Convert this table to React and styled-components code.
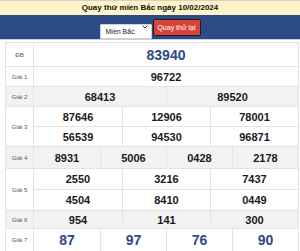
import React from 'react';
import styled, { createGlobalStyle } from 'styled-components';

// heights per line, the row's own top border is counted outside them
const ROWS = [
  { label: 'ĐB', lines: [['83940']], big: true, heights: [23] },
  { label: 'Giải 1', lines: [['96722']], heights: [19] },
  { label: 'Giải 2', lines: [['68413', '89520']], shade: true, heights: [19] },
  {
    label: 'Giải 3',
    lines: [
      ['87646', '12906', '78001'],
      ['56539', '94530', '96871'],
    ],
    heights: [19, 19],
  },
  { label: 'Giải 4', lines: [['8931', '5006', '0428', '2178']], shade: true, heights: [21] },
  {
    label: 'Giải 5',
    lines: [
      ['2550', '3216', '7437'],
      ['4504', '8410', '0449'],
    ],
    heights: [20, 20],
  },
  { label: 'Giải 6', lines: [['954', '141', '300']], shade: true, heights: [17] },
  { label: 'Giải 7', lines: [['87', '97', '76', '90']], big: true, heights: [22] },
];

const GlobalStyle = createGlobalStyle`
  * { box-sizing: border-box; }
  body {
    margin: 0;
    background: #fff;
    font-family: "Liberation Sans", Arial, sans-serif;
  }
`;

const Title = styled.div`
  height: 15px;
  border-top: 1px solid #d6d2bd;
  background: #fdf3c6;
  color: #111;
  font-size: 8px;
  font-weight: bold;
  line-height: 14px;
  text-align: center;
`;

const Toolbar = styled.div`
  height: 25px;
  background: #2c4a85;
  border-bottom: 1px solid #c9d0dc;
  display: flex;
  align-items: center;
  justify-content: center;
  gap: 1px;
`;

const SelectBox = styled.div`
  position: relative;
  width: 52px;
  height: 15px;
  svg {
    position: absolute;
    right: 4px;
    top: 5px;
    pointer-events: none;
  }
`;

const Select = styled.select`
  appearance: none;
  width: 100%;
  height: 100%;
  padding: 0 0 0 5px;
  font-family: inherit;
  font-size: 7px;
  color: #222;
  background: #fff;
  border: 1px solid #d0d0d0;
  border-radius: 1px;
  outline: none;
`;

const Button = styled.button`
  width: 48px;
  height: 17px;
  padding: 0;
  font-family: inherit;
  font-size: 7px;
  color: #fff;
  background: #d8433a;
  border: 1px solid #1d1d1d;
  border-radius: 2px;
  cursor: pointer;
`;

const Table = styled.div`
  margin: 2px 1px 0 5px;
  border: 1px solid #e4e4e4;
`;

const Row = styled.div`
  display: grid;
  grid-template-columns: 28px 1fr;
  background: ${(p) => (p.$shade ? '#f2f2f2' : '#fff')};
  & + & {
    border-top: 1px solid #e4e4e4;
  }
`;

const Label = styled.div`
  display: flex;
  align-items: center;
  justify-content: center;
  border-right: 1px solid #e4e4e4;
  color: #555;
  font-size: 6px;
`;

const Values = styled.div`
  display: flex;
  flex-direction: column;
`;

const Line = styled.div`
  display: grid;
  grid-template-columns: repeat(${(p) => p.$cols}, 1fr);
  height: ${(p) => p.$height}px;
  & + & {
    border-top: 1px solid #e4e4e4;
  }
`;

const Cell = styled.div`
  display: flex;
  align-items: center;
  justify-content: center;
  font-weight: bold;
  font-size: ${(p) => (p.$big ? '14px' : '11px')};
  color: ${(p) => (p.$big ? '#2d4a86' : '#1a1a1a')};
  & + & {
    border-left: 1px solid #e4e4e4;
  }
`;

export default function App() {
  return (
    <>
      <GlobalStyle />
      <Title>Quay thử miền Bắc ngày 10/02/2024</Title>
      <Toolbar>
        <SelectBox>
          <Select defaultValue="mb">
            <option value="mb">Miền Bắc</option>
            <option value="mt">Miền Trung</option>
            <option value="mn">Miền Nam</option>
          </Select>
          <svg width="6" height="4" viewBox="0 0 6 4">
            <path d="M0.6 0.6 L3 3 L5.4 0.6" fill="none" stroke="#333" strokeWidth="1" />
          </svg>
        </SelectBox>
        <Button>Quay thử lại</Button>
      </Toolbar>
      <Table>
        {ROWS.map((row) => (
          <Row key={row.label} $shade={row.shade}>
            <Label>{row.label}</Label>
            <Values>
              {row.lines.map((line, i) => (
                <Line
                  key={i}
                  $cols={line.length}
                  $height={row.heights[i] + (i > 0 ? 1 : 0)}
                >
                  {line.map((num, j) => (
                    <Cell key={j} $big={row.big}>
                      {num}
                    </Cell>
                  ))}
                </Line>
              ))}
            </Values>
          </Row>
        ))}
      </Table>
    </>
  );
}
